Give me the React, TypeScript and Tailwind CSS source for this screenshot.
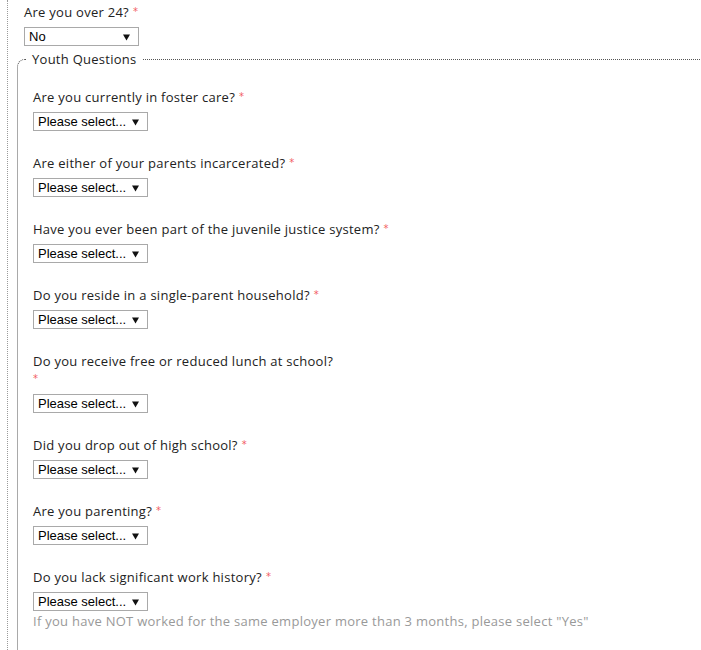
import React from "react";

const Star = ({ wrapped }: { wrapped?: boolean }) => (
  <span className={`relative top-[2px] align-top text-[10px] leading-[14px] text-[#f25c64] ${wrapped ? "ml-0" : "ml-[4px]"}`} style={{ fontFamily: "'DejaVu Sans', sans-serif" }}>*</span>
);

const Select = ({ value }: { value: string }) => (
  <div className="mt-[6px] flex h-[19px] w-[115px] items-center justify-between border border-[#a9a9a9] bg-white pl-[4px] pr-[8px] font-['Liberation_Sans',Arial,sans-serif] text-[13px] leading-none tracking-normal text-black">
    <span>{value}</span>
    <svg width="7" height="7" viewBox="0 0 7 7" className="mt-[1px]">
      <path d="M0 0.5 H7 L3.5 6.5 Z" fill="#111" />
    </svg>
  </div>
);

type Q = { text: string; wrapStar?: boolean; help?: string };

const questions: Q[] = [
  { text: "Are you currently in foster care?" },
  { text: "Are either of your parents incarcerated?" },
  { text: "Have you ever been part of the juvenile justice system?" },
  { text: "Do you reside in a single-parent household?" },
  { text: "Do you receive free or reduced lunch at school?", wrapStar: true },
  { text: "Did you drop out of high school?" },
  { text: "Are you parenting?" },
  {
    text: "Do you lack significant work history?",
    help: 'If you have NOT worked for the same employer more than 3 months, please select "Yes"',
  },
];

export default function App() {
  return (
    <div className="h-[650px] w-[701px] overflow-hidden bg-white font-['Open_Sans',sans-serif] text-[13px] leading-[18px] tracking-[0.27px] text-[#222]">
      <div className="ml-[7px] h-[700px] border-l border-dotted border-[#9a9a9a] pl-[15px] pt-[3px]">
        <div className="pl-[1px]">
          Are you over 24?
          <Star />
        </div>
        <div className="ml-[1px]">
          <Select value="No" />
        </div>
        <fieldset className="ml-[-6px] mt-[4px] w-[760px] rounded-l-[8px] border border-dotted border-[#555] pb-[40px] pl-[15px] pt-0">
          <legend className="ml-[-7px] px-[6px] text-[13px] leading-[18px]">Youth Questions</legend>
          <div className="pt-[20px]">
            {questions.map((q, i) => (
              <div key={i} className="mb-[23px]">
                {q.wrapStar ? (
                  <>
                    <div>{q.text}</div>
                    <div className="h-[18px]">
                      <Star wrapped />
                    </div>
                  </>
                ) : (
                  <div>
                    {q.text}
                    <Star />
                  </div>
                )}
                <Select value="Please select..." />
                {q.help && <div className="mt-[1px] text-[#999]">{q.help}</div>}
              </div>
            ))}
          </div>
        </fieldset>
      </div>
    </div>
  );
}
